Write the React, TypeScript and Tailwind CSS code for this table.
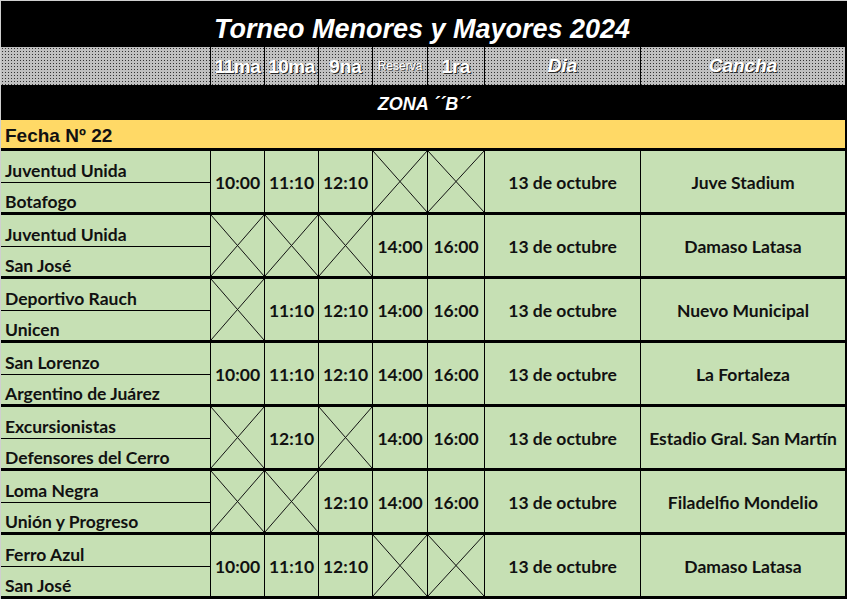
import React from 'react';

type Match = {
  home: string;
  away: string;
  slots: (string | null)[];
  dia: string;
  cancha: string;
};

const matches: Match[] = [
  { home: 'Juventud Unida', away: 'Botafogo', slots: ['10:00', '11:10', '12:10', null, null], dia: '13 de octubre', cancha: 'Juve Stadium' },
  { home: 'Juventud Unida', away: 'San José', slots: [null, null, null, '14:00', '16:00'], dia: '13 de octubre', cancha: 'Damaso Latasa' },
  { home: 'Deportivo Rauch', away: 'Unicen', slots: [null, '11:10', '12:10', '14:00', '16:00'], dia: '13 de octubre', cancha: 'Nuevo Municipal' },
  { home: 'San Lorenzo', away: 'Argentino de Juárez', slots: ['10:00', '11:10', '12:10', '14:00', '16:00'], dia: '13 de octubre', cancha: 'La Fortaleza' },
  { home: 'Excursionistas', away: 'Defensores del Cerro', slots: [null, '12:10', null, '14:00', '16:00'], dia: '13 de octubre', cancha: 'Estadio Gral. San Martín' },
  { home: 'Loma Negra', away: 'Unión y Progreso', slots: [null, null, '12:10', '14:00', '16:00'], dia: '13 de octubre', cancha: 'Filadelfio Mondelio' },
  { home: 'Ferro Azul', away: 'San José', slots: ['10:00', '11:10', '12:10', null, null], dia: '13 de octubre', cancha: 'Damaso Latasa' },
];

const slotWidths = ['w-[54px]', 'w-[54px]', 'w-[54px]', 'w-[55px]', 'w-[57px]'];

const dotted =
  'bg-[#c0c0c0] bg-[radial-gradient(circle,#333_0.8px,transparent_0.95px)] bg-[length:3px_3px]';

const shadow = '[text-shadow:1px_1px_0_#2a2a2a]';

const Cross = () => (
  <svg className="absolute inset-0 h-full w-full" viewBox="0 0 100 100" preserveAspectRatio="none">
    <line x1="0" y1="0" x2="100" y2="100" stroke="#111" strokeWidth="1" vectorEffect="non-scaling-stroke" />
    <line x1="100" y1="0" x2="0" y2="100" stroke="#111" strokeWidth="1" vectorEffect="non-scaling-stroke" />
  </svg>
);

const MatchRow = ({ m }: { m: Match }) => (
  <div className="flex h-[64px] border-t-[3px] border-black bg-[#c6e0b4] text-[#111] font-['Lato',sans-serif] font-bold text-[17.5px]">
    <div className="flex w-[209px] shrink-0 flex-col leading-[19px]">
      <div className="flex h-[32px] items-end border-b border-black pb-[2px] pl-[4px]">{m.home}</div>
      <div className="flex flex-1 items-end pb-[1px] pl-[4px]">{m.away}</div>
    </div>
    {m.slots.map((s, i) => (
      <div key={i} className={`relative flex shrink-0 items-center justify-center border-l border-black ${slotWidths[i]}`}>
        {s ? <span className="pt-[3px]">{s}</span> : <Cross />}
      </div>
    ))}
    <div className="flex w-[156px] shrink-0 items-center justify-center border-l border-black pt-[3px]">{m.dia}</div>
    <div className="flex w-[205px] shrink-0 items-center justify-center border-l border-black pt-[3px]">{m.cancha}</div>
    <div className="w-[2px] shrink-0 bg-black" />
  </div>
);

const App: React.FC = () => {
  return (
    <div className="h-[599px] w-[847px] overflow-hidden border-l border-t border-[#cfcfcf] bg-black font-['Liberation_Sans',Arial,sans-serif]">
      {/* Title */}
      <div className="flex h-[46px] items-center justify-center pt-[10px] text-[27px] font-bold italic text-white">
        <span className="pr-[4px]">Torneo Menores y Mayores 2024</span>
      </div>

      {/* Column headers */}
      <div className={`flex h-[38px] font-bold text-white ${dotted} ${shadow}`}>
        <div className="w-[209px] shrink-0" />
        <div className="flex w-[54px] shrink-0 items-center justify-center border-l border-black pt-[2px] text-[19px] tracking-[-0.5px]">11ma</div>
        <div className="flex w-[54px] shrink-0 items-center justify-center border-l border-black pt-[2px] text-[19px] tracking-[-0.5px]">10ma</div>
        <div className="flex w-[54px] shrink-0 items-center justify-center border-l border-black pt-[2px] text-[19px]">9na</div>
        <div className="flex w-[55px] shrink-0 items-center justify-center border-l border-black text-[12px] font-normal [text-shadow:1px_1px_0_#555]">Reserva</div>
        <div className="flex w-[57px] shrink-0 items-center justify-center border-l border-black pt-[2px] text-[19px]">1ra</div>
        <div className="flex w-[156px] shrink-0 items-center justify-center border-l border-black text-[19px] italic">Dia</div>
        <div className="flex w-[205px] shrink-0 items-center justify-center border-l border-black text-[19px] italic">Cancha</div>
        <div className="w-[2px] shrink-0 bg-black" />
      </div>

      {/* Zona */}
      <div className="flex h-[35px] items-center justify-center pt-[3px] text-[18px] font-bold italic text-white">
        ZONA ´´B´´
      </div>

      {/* Fecha */}
      <div className="flex h-[28px]">
        <div className="flex flex-1 items-center bg-[#ffd966] pl-[4px] pt-[5px] text-[19px] font-bold text-[#111]">
          Fecha Nº 22
        </div>
        <div className="w-[2px] shrink-0 bg-black" />
      </div>

      {matches.map((m, i) => (
        <MatchRow key={i} m={m} />
      ))}
    </div>
  );
};

export default App;
